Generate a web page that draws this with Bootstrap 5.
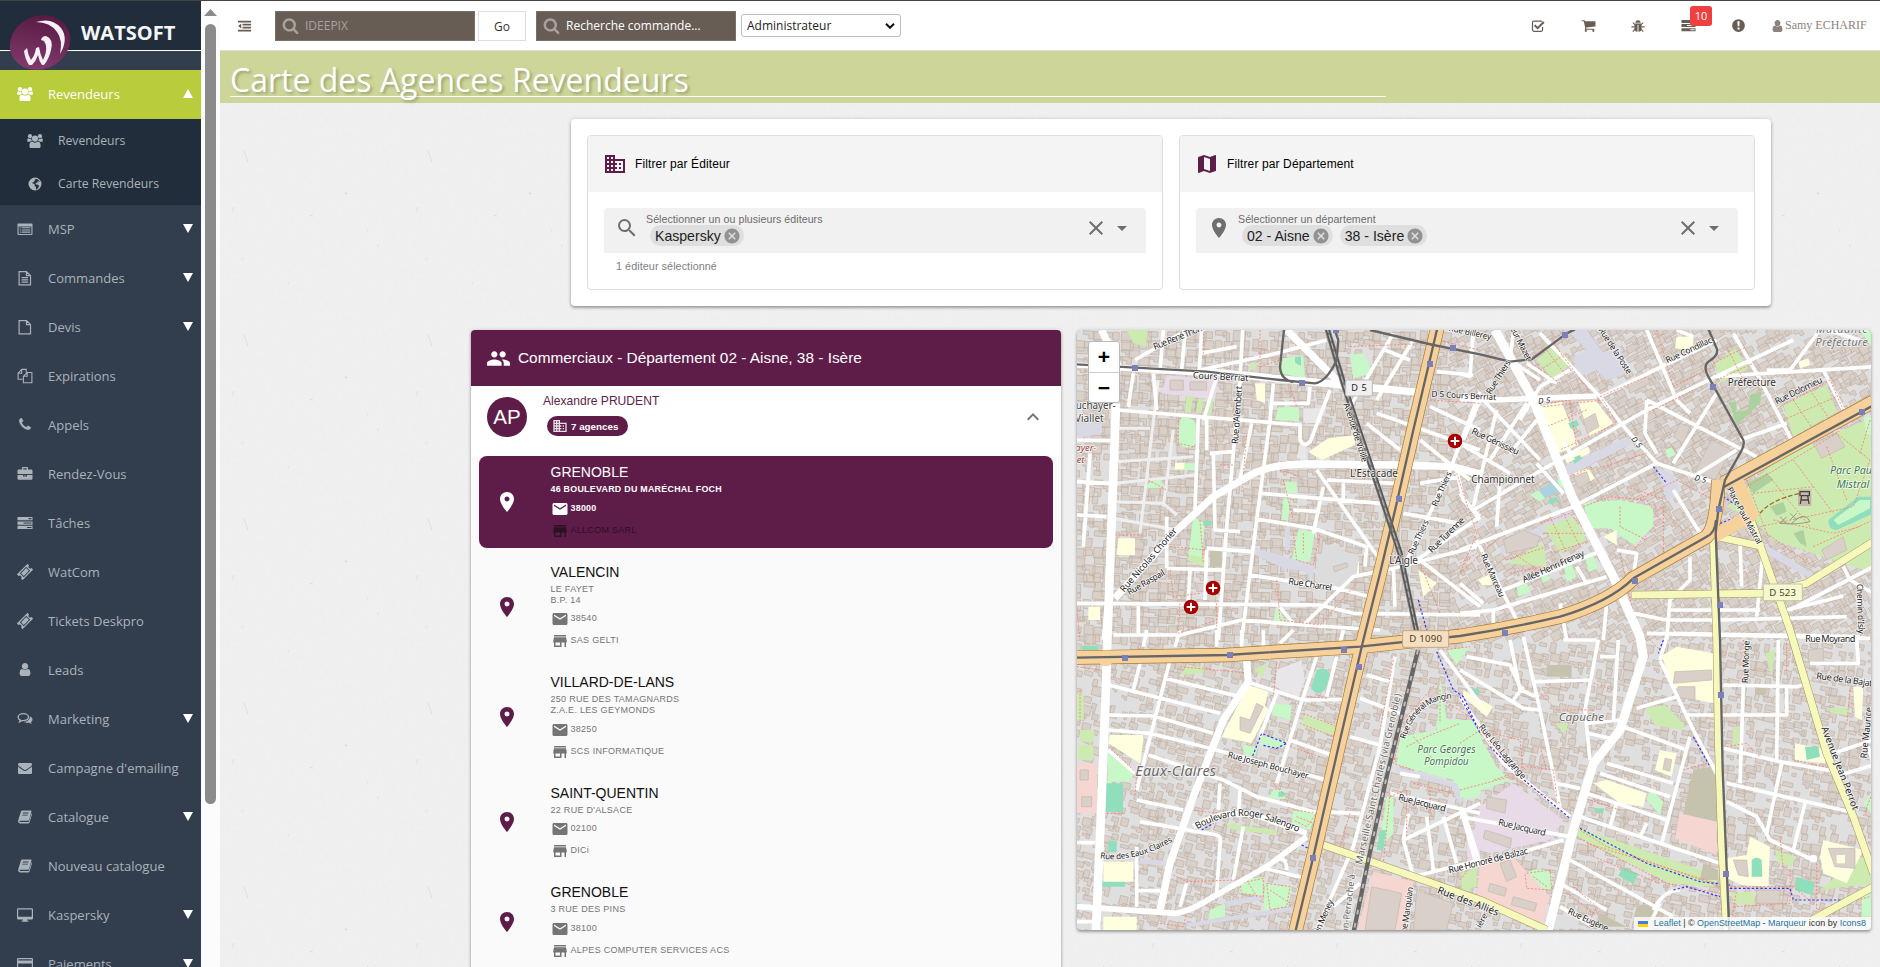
<!DOCTYPE html>
<html lang="fr">
<head>
<meta charset="utf-8">
<title>Carte des Agences Revendeurs</title>
<link href="https://cdn.jsdelivr.net/npm/bootstrap@5.3.0/dist/css/bootstrap.min.css" rel="stylesheet">
<style>
:root{--plum:#5e1d49}
html,body{height:967px;overflow:hidden}
body{font-family:"Liberation Sans",Arial,sans-serif;border-top:1px solid #444;background:#f0f0f0;color:#000;line-height:normal}
svg{display:block;flex:none}
.ic{fill:currentColor}
.shell{height:966px}
/* sidebar */
.side{width:201px;background:#323e4e;font:13px "Open Sans",sans-serif;color:#aab2ba;flex:none}
.side-head{height:50px;border-bottom:1px solid #fff;background:#212d3b;padding:8px 0 0 81px;margin-bottom:19px;position:relative}
.side-head b{font-size:20px;color:#f4f6f7;line-height:48px;display:block;height:40px}
.logo{position:absolute;left:9px;top:13px}
.nav-i{height:49px;padding:0 8px 2px 17px}
.nav-i .t{margin-left:15px}
.nav-i.on{background:#b9cc3b;color:#fff}
.sub{background:#212d3b}
.sub .nav-i{height:43px;padding:0 8px 0 27px;font-size:12.2px}
.tri{fill:#fff;margin-left:auto;margin-bottom:1px}
.sbar{width:19px;background:#fcfcfc;flex:none;padding:8px 4px 0 3px}
.sbar i{display:block;width:11px;height:780px;border-radius:6px;background:#8b8b8b;margin:8px 0 0 1px}
/* top bar */
.main{min-width:0;background-color:#f0f0f0}
.top{height:50px;background:#fff;border-bottom:1px solid #dcdcdc;color:#685d55;font:12px "Open Sans",sans-serif;padding-left:17px}
.top .dd{margin-right:23px}
.sbox{width:200px;height:30px;background:#685d55;border:1px solid #7a6f67;outline:1px solid #685d55;outline-offset:-2px;color:#a9a29c;padding-left:6px;gap:6px}
.go{width:48px;height:30px;border:1px solid #ddd;color:#333;margin:1px 10px 0 3px}
.sel{width:160px;height:23px;border:1px solid #bdbdbd;border-radius:3px;color:#222;margin:0 0 0 5px;padding:0 5px}
.t-ic{width:50px}
.cnt{position:absolute;left:27px;top:-12px;width:22px;height:20px;border-radius:3px;background:#ef4040;color:#fff;font-size:11px;text-align:center;line-height:19px}
.who{font:12px "Liberation Serif",serif;color:#8b827b;gap:2px;width:117px;padding-left:9px;white-space:nowrap}
.band{height:52px;background:#cdd698;padding:0 10px}
.band h1{font:32px/46px "Open Sans",sans-serif;height:46px;width:1156px;color:#fff;border-bottom:1px solid #fff;margin:0;padding-top:6px;text-shadow:2px 2px 3px rgba(0,0,0,.25);white-space:nowrap}
.paper{background:#f0f0f0 url("data:image/svg+xml,%3Csvg xmlns='http://www.w3.org/2000/svg' width='184' height='184'%3E%3Cfilter id='n'%3E%3CfeTurbulence baseFrequency='.55' numOctaves='3' stitchTiles='stitch'/%3E%3CfeColorMatrix values='0 0 0 0 .4 0 0 0 0 .4 0 0 0 0 .4 .12 0 0 0 -.035'/%3E%3C/filter%3E%3Crect width='184' height='184' filter='url(%23n)'/%3E%3Cpath d='M12 26l2-4M125 8h2v1h-2M22 74h1v1M147 45h1v1M68 98h1M106 119h1M24 150l4 11M158 60v2M90 30l3 1' stroke='%23ccc' stroke-width='.5' fill='none'/%3E%3C/svg%3E")}
/* filters */
.mcard{border-radius:4px;box-shadow:0 2px 3px rgba(0,0,0,.3),0 0 4px rgba(0,0,0,.14)}
.filters{width:1200px;height:187px;margin:16px 0 0 351px;background:#fff;padding:16px}
.fbox{width:576px;height:155px;border:1px solid #dedede;border-radius:4px;overflow:hidden}
.fhead{height:56px;background:#f4f4f4;font-size:12px;letter-spacing:.12px;padding-left:15px;gap:8px}
.field{height:45px;margin:16px 16px 0;background:#f1f1f1;border-radius:4px 4px 0 0;color:#6e6e6e;padding:0 12px 0 11px}
.fcol{padding:5px 0 0 7px}
.lab{font-size:10.6px;line-height:12px;color:#6b6b6b;letter-spacing:.06px}
.dd-a{margin-left:2px}
.chip-m{height:21px;border-radius:11px;background:#dfdfdf;color:#222;font-size:14.1px;padding:1px 2px 0 5px;margin-left:4px;margin-right:3px;gap:1px}
.chip-m svg{fill:#929292;margin-bottom:1px}
.hint{font-size:10.8px;letter-spacing:.06px;color:#808080;margin:7px 0 0 28px}
/* reps */
.cols{gap:16px;margin:24px 0 0 251px}
.reps{width:590px;height:660px;background:#fafafa;overflow:hidden}
.rhead{height:56px;background:var(--plum);color:#fff;font-size:15.4px;padding-left:15px;gap:7px}
.rep{height:70px;background:#fff;padding:0 16px}
.ava{width:40px;height:40px;border-radius:50%;background:var(--plum);color:#fff;font-size:20.5px;margin-top:11px}
.nm{color:var(--plum);font-size:12.1px;line-height:14px;margin-top:8px}
.bdg{width:81px;height:20px;border-radius:10px;background:var(--plum);color:#fff;font-weight:bold;font-size:9.8px;margin:8px 0 0 4px;padding-left:5px;gap:3px}
.chev{margin:19px 0 0 auto}
.ag{margin:0 8px 7.5px;border-radius:8px;padding:8px 0 7px 15.5px;font-size:9px;letter-spacing:.28px;color:#757575}
.ag .pin{color:var(--plum);width:24px;margin:0 32px 2px 0}
.ag h2{font-size:14px;line-height:16px;letter-spacing:0;margin:0 0 4px;color:#111;font-weight:400}
.ag .ad{line-height:11px;margin-bottom:2px}
.ag .ln{height:22px;gap:1px;padding-bottom:1px}
.ag .ln svg{margin:2px 0 0 -1px}
.ag.on{background:var(--plum);color:#fff}
.ag.on .pin,.ag.on h2{color:#fff}
.ag.on .ad,.ag.on .ml{font-weight:bold;letter-spacing:.26px;font-size:8.9px}
.ag.on .st{color:#2c1024}
/* map */
.map{width:794px;height:600px;overflow:hidden;position:relative;background:#e0dfdf}
.zoomc{position:absolute;left:11px;top:11px;width:32px;border:1px solid #bbb;border-radius:3px;background:#fff;font:bold 21px/29px "Liberation Sans",sans-serif;text-align:center}
.zoomc div{height:30px}
.zoomc div+div{border-top:1px solid #ccc}
.attr{position:absolute;right:0;bottom:0;height:13px;background:rgba(255,255,255,.8);font-size:8.95px;line-height:13px;color:#333;padding:0 5px 0 4px;gap:2px;white-space:pre}
.attr u{color:#1d76a5;text-decoration:none}
.map text{font-family:"Noto Sans",sans-serif;font-size:27.5px;fill:#222;stroke:#fff;stroke-width:5px;stroke-opacity:.75;paint-order:stroke;stroke-linejoin:round}
.map path{stroke-linejoin:round}
.w{stroke:#fff;fill:none}.or{stroke:#f7d19c;fill:none}.ye{stroke:#f6f9bb;fill:none}.tr{stroke:#666;stroke-width:7;fill:none}
.g1{fill:#c8f7c8}.g2{fill:#cdebb0}.g3{fill:#add19e}.y1{fill:#ffffe0}.pk{fill:#f6d6d1}.pu{fill:#e8dae7}.tq{fill:#8fdfbc}.gr{fill:#c5c3ad}.pd{fill:#d9d9e6}.bl{fill:#d9d0c9;stroke:#c4b6ab;stroke-width:2}
.rd{stroke:#fa8072;stroke-width:2.6;stroke-dasharray:6 5;fill:none}.bd{stroke:#33f;stroke-width:3.5;stroke-dasharray:7 6;fill:none}
</style>
</head>
<body>
<svg width="0" height="0" class="position-absolute"><defs>
<symbol id="search" viewBox="0 0 1792 1792"><path d="M1216 832q0-185-131.500-316.500t-316.500-131.500-316.500 131.500-131.500 316.500 131.500 316.500 316.500 131.500 316.500-131.500 131.500-316.500zm512 832q0 52-38 90t-90 38q-54 0-90-38l-343-342q-179 124-399 124-143 0-273.500-55.500t-225-150-150-225-55.500-273.500 55.500-273.500 150-225 225-150 273.500-55.500 273.500 55.500 225 150 150 225 55.500 273.500q0 220-124 399l343 343q37 37 37 90z"/></symbol>
<symbol id="envelope" viewBox="0 0 1792 1792"><path d="M1792 710v794q0 66-47 113t-113 47h-1472q-66 0-113-47t-47-113v-794q44 49 101 87 362 246 497 345 57 42 92.500 65.500t94.500 48 110 24.500h2q51 0 110-24.500t94.500-48 92.500-65.500q170-123 498-345 57-39 100-87zm0-294q0 79-49 151t-122 123q-376 261-468 325-10 7-42.500 31t-54 38.500-52 32.500-57.500 27-50 9h-2q-23 0-50-9t-57.500-27-52-32.500-54-38.500-42.500-31q-91-64-262-182.500t-205-142.500q-62-42-117-115.500t-55-136.500q0-78 41.500-130t118.500-52h1472q65 0 112.500 47t47.500 113z"/></symbol>
<symbol id="user" viewBox="0 0 1792 1792"><path d="M1536 1399q0 109-62.500 187t-150.500 78h-854q-88 0-150.500-78t-62.500-187q0-85 8.500-160.500t31.500-152 58.500-131 94-89 134.500-34.500q131 128 313 128t313-128q76 0 134.500 34.500t94 89 58.500 131 31.500 152 8.500 160.500zm-256-887q0 159-112.500 271.500t-271.500 112.500-271.500-112.500-112.500-271.500 112.500-271.500 271.500-112.500 271.500 112.500 112.500 271.500z"/></symbol>
<symbol id="phone" viewBox="0 0 1792 1792"><path d="M1600 1240q0 27-10 70.500t-21 68.500q-21 50-122 106-94 51-186 51-27 0-53-3.500t-57.500-12.500-47-14.500-55.500-20.500-49-18q-98-35-175-83-127-79-264-216t-216-264q-48-77-83-175-3-9-18-49t-20.500-55.500-14.500-47-12.500-57.500-3.500-53q0-92 51-186 56-101 106-122 25-11 68.500-21t70.500-10q14 0 21 3 18 6 53 76 11 19 30 54t35 63.500 31 53.500q3 4 17.500 25t21.500 35.500 7 28.500q0 20-28.500 50t-62 55-62 53-28.500 46q0 9 5 22.500t8.500 20.500 14 24 11.500 19q76 137 174 235t235 174q2 1 19 11.500t24 14 20.500 8.500 22.500 5q18 0 46-28.500t53-62 55-62 50-28.500q14 0 28.500 7t35.500 21.500 25 17.500q25 15 53.500 31t63.500 35 54 30q70 35 76 53 3 7 3 21z"/></symbol>
<symbol id="cart" viewBox="0 0 1792 1792"><path d="M704 1536q0 52-38 90t-90 38-90-38-38-90 38-90 90-38 90 38 38 90zm896 0q0 52-38 90t-90 38-90-38-38-90 38-90 90-38 90 38 38 90zm128-1088v512q0 24-16.500 42.500t-40.500 21.500l-1044 122q13 60 13 70 0 16-24 64h920q26 0 45 19t19 45-19 45-45 19h-1024q-26 0-45-19t-19-45q0-11 8-31.500t16-36 21.500-40 15.500-29.500l-177-823h-204q-26 0-45-19t-19-45 19-45 45-19h256q16 0 28.500 6.500t19.500 15.500 13 24.500 8 26 5.500 29.500 4.500 26h1201q26 0 45 19t19 45z"/></symbol>
<symbol id="users" viewBox="0 0 16 16"><circle cx="8" cy="5.6" r="3.1"/><path d="M3.200 15q-.8-.4-.8-2 0-4.200 2.700-4.400Q6.200 9.700 8 9.700t2.900-1.100q2.700.2 2.700 4.400 0 1.600-.8 2z"/><circle cx="3" cy="3.200" r="2.100"/><circle cx="13" cy="3.200" r="2.100"/><path d="M.3 8.500Q0 5.400 1.200 5.300q1.800 1 3 .3.1 1.300.8 2.200Q3.700 8 3.100 8.800H.3zM15.700 8.500q.3-3.100-.9-3.200-1.800 1-3 .3-.1 1.300-.8 2.200 1.300.2 1.900 1h2.800z"/></symbol>
<symbol id="globe" viewBox="0 0 16 16"><path fill-rule="evenodd" d="M8 1.500a6.500 6.500 0 1 0 0 13 6.500 6.500 0 0 0 0-13zM9 3l2 .4 1.800 2-1 .3-.8-.8-.9 1.100.6.8-1.400-.1-1 1 .8.9 1.700.2 1.200.7-.4 1.800-1.800 2.200-.8-.3.100-2-1.400-1.500.1-1.200L6.300 7.400 4.800 7l.7-.6.9.2.9-1.300 1-.5L7.200 4z"/></symbol>
<symbol id="list" viewBox="0 0 16 16"><path fill-rule="evenodd" d="M1.200 2.500h13.600q.7 0 .7.700v10q0 .8-.7.800H1.200q-.7 0-.7-.8v-10q0-.7.700-.7zm.4 2.900v7.500h12.800V5.400zM2.700 6.200h1.100v1.100H2.700zm2 0h8.700v1.100H4.700zm-2 2.200h1.100v1.100H2.700zm2 0h8.700v1.100H4.700zm-2 2.200h1.100v1.100H2.700zm2 0h8.700v1.100H4.700z"/></symbol>
<symbol id="filet" viewBox="0 0 16 16"><path fill="none" stroke="currentColor" stroke-width="1.200" d="M2.100 1.600h7.400l4 4v9.300H2.100zM9.500 1.600v4h4M4.600 7.700h6.400M4.600 9.900h6.400M4.600 12.100h6.400"/></symbol>
<symbol id="file" viewBox="0 0 16 16"><path fill="none" stroke="currentColor" stroke-width="1.200" d="M2.100 1.600h7.400l4 4v9.300H2.100zM9.500 1.600v4h4"/></symbol>
<symbol id="files" viewBox="0 0 16 16"><path fill="none" stroke="currentColor" stroke-width="1.100" d="M5.600 11.300H1.100V5.200l3.600-3.800h4.500v3M4.700 1.400v3.800H1.100M6.400 8.300l3.800-3.800h4.700v10.200H6.400zM10.200 4.500v3.800H6.400"/></symbol>
<symbol id="brief" viewBox="0 0 16 16"><path fill-rule="evenodd" d="M5 3.400V1.700q0-.7.700-.7h4.600q.7 0 .7.700v1.700h3.300q1.200 0 1.200 1.200v3.300H.5V4.600q0-1.200 1.200-1.200zm1.200-1.200v1.200h3.600V2.200zM.5 8.900h5.600v1.500h3.800V8.900h5.600v3.600q0 1.200-1.200 1.200H1.700q-1.200 0-1.200-1.200zm6.600 0h1.800v.7H7.100z"/></symbol>
<symbol id="tasks" viewBox="0 0 16 16"><path fill-rule="evenodd" d="M.5 2h15v3.300H.5zm11 1.100v1.100h3V3.100zM.5 6.400h15v3.300H.5zm6 1.100v1.100h8V7.500zM.5 10.800h15v3.300H.5zm9.500 1.100V13h4.500v-1.100z"/></symbol>
<symbol id="ticket" viewBox="0 0 16 16"><g transform="rotate(-45 8 8)"><path fill-rule="evenodd" d="M.5 4h15v2.200a1.800 1.800 0 0 0 0 3.600V12H.5V9.800a1.800 1.800 0 0 0 0-3.600zm3 1.200v5.600h9V5.200zM4.400 6.100h7.200v3.800H4.400z"/></g></symbol>
<symbol id="comments" viewBox="0 0 16 16"><path fill="none" stroke="currentColor" stroke-width="1.300" d="M6.300 2.700c-3 0-5.200 1.600-5.200 3.500 0 1.200.8 2.200 2.200 2.900l-.7 1.700 2.300-1.200c3.500.5 6.600-1.100 6.600-3.400 0-1.900-2.200-3.500-5.200-3.500z"/><path d="M12.800 5.200c1.700.7 2.900 2 2.700 3.500-.1 1-.7 1.800-1.700 2.400l1 2-2.900-1.300c-2 .3-4-.1-5.200-1.100 3.400.2 6.400-1.700 6.100-5.500z"/></symbol>
<symbol id="book" viewBox="0 0 16 16"><path fill-rule="evenodd" d="M5.200 1.500h9q1 .1.700 1.200l-2.500 8.800q-.3 1-1.500 1H3q-.9 0-.9.800.1.500.9.500h8.400q.6 0 .9-.7l2.700-8.500q.6.500.4 1.300l-2.600 8.400q-.3 1.200-1.600 1.200H2.700Q.600 15.200.6 13q0-.8.500-2L3.600 2.900q.4-1.400 1.600-1.400zm.7 2.300l-.3 1h5.900l.3-1zM5.200 6l-.3 1h5.900l.3-1z"/></symbol>
<symbol id="desktop" viewBox="0 0 16 16"><path fill-rule="evenodd" d="M1.200 1.300h13.600q1.200 0 1.200 1.100v9q0 1.100-1.200 1.100H10l.4 1.300h1v1H4.600v-1h1l.4-1.300H1.200Q0 12.500 0 11.400v-9q0-1.100 1.200-1.100zm0 1.200v7.200h13.600V2.500z"/></symbol>
<symbol id="card" viewBox="0 0 16 16"><path fill-rule="evenodd" d="M1.200 2h13.600q1.200 0 1.200 1.200v9.600q0 1.200-1.200 1.200H1.200Q0 14 0 12.800V3.200Q0 2 1.200 2zm0 1.200v1.300h13.600V3.200zm0 4.300v5.300h13.600V7.500z"/></symbol>
<symbol id="dedent" viewBox="0 0 16 16"><path d="M.5 2h15v2H.5zm5.300 3.400h9.700v2H5.800zm0 3.400h9.700v2H5.800zM.5 12.200h15v2H.5zM4.300 5.200v5.600L.7 8z"/></symbol>
<symbol id="check" viewBox="0 0 16 16"><path fill="none" stroke="currentColor" stroke-width="1.400" d="M13.200 9v3.400q0 1.700-1.700 1.700H3.400q-1.700 0-1.700-1.700V4.200q0-1.700 1.700-1.700h8.100q.9 0 1.300.4"/><path fill="none" stroke="currentColor" stroke-width="2.300" d="M4.200 7.200l3.300 3.200 7.200-7"/></symbol>
<symbol id="bug" viewBox="0 0 16 16"><path d="M5 4.300a3 3 0 0 1 6 0zM3.900 5.200h8.200v6q0 3.200-3.600 3.500V6.500h-1v8.200q-3.600-.3-3.600-3.500z"/><path fill="none" stroke="currentColor" stroke-width="1.200" d="M4.500 6.500L2 4M11.500 6.500L14 4M4 9H.5M12 9h3.500M4.500 11.500L2 14.500M11.500 11.500L14 14.500"/></symbol>
<symbol id="excl" viewBox="0 0 16 16"><path fill-rule="evenodd" d="M8 1.200a6.800 6.800 0 1 0 0 13.600A6.800 6.800 0 0 0 8 1.200zM6.800 3.400h2.400l-.3 5.400H7.100zM6.900 10h2.200v2.200H6.900z"/></symbol>
<symbol id="place" viewBox="0 0 24 24"><path d="M12 2C8.130 2 5 5.130 5 9c0 5.250 7 13 7 13s7-7.750 7-13c0-3.870-3.130-7-7-7zm0 9.500a2.500 2.500 0 0 1 0-5 2.500 2.500 0 0 1 0 5z"/></symbol>
<symbol id="mail" viewBox="0 0 24 24"><path d="M20 4H4c-1.100 0-1.990.9-1.990 2L2 18c0 1.100.9 2 2 2h16c1.100 0 2-.9 2-2V6c0-1.100-.9-2-2-2zm0 4l-8 5-8-5V6l8 5 8-5v2z"/></symbol>
<symbol id="store" viewBox="0 0 24 24"><path d="M20 4H4v2h16V4zm1 10v-2l-1-5H4l-1 5v2h1v6h10v-6h4v6h2v-6h1zm-9 4H6v-4h6v4z"/></symbol>
<symbol id="people" viewBox="0 0 24 24"><path d="M16 11c1.660 0 2.990-1.340 2.990-3S17.660 5 16 5c-1.660 0-3 1.340-3 3s1.340 3 3 3zm-8 0c1.660 0 2.990-1.340 2.990-3S9.660 5 8 5C6.340 5 5 6.340 5 8s1.340 3 3 3zm0 2c-2.330 0-7 1.170-7 3.500V19h14v-2.500c0-2.330-4.670-3.500-7-3.500zm8 0c-.29 0-.62.02-.97.05 1.160.84 1.970 1.970 1.970 3.450V19h6v-2.500c0-2.330-4.670-3.500-7-3.500z"/></symbol>
<symbol id="msearch" viewBox="0 0 24 24"><path d="M15.500 14h-.79l-.28-.27A6.471 6.471 0 0 0 16 9.500 6.500 6.500 0 1 0 9.500 16c1.610 0 3.090-.59 4.230-1.570l.27.28v.79l5 4.990L20.490 19l-4.990-5zm-6 0C7.010 14 5 11.990 5 9.500S7.010 5 9.500 5 14 7.010 14 9.500 11.990 14 9.500 14z"/></symbol>
<symbol id="close" viewBox="0 0 24 24"><path d="M19 6.410L17.590 5 12 10.590 6.410 5 5 6.410 10.590 12 5 17.590 6.410 19 12 13.410 17.590 19 19 17.590 13.410 12z"/></symbol>
<symbol id="arrow" viewBox="0 0 24 24"><path d="M7 10l5 5 5-5z"/></symbol>
<symbol id="cancel" viewBox="0 0 24 24"><path d="M12 2C6.470 2 2 6.470 2 12s4.470 10 10 10 10-4.470 10-10S17.530 2 12 2zm5 13.590L15.590 17 12 13.410 8.410 17 7 15.590 10.590 12 7 8.410 8.410 7 12 10.590 15.590 7 17 8.410 13.410 12 17 15.590z"/></symbol>
<symbol id="mapi" viewBox="0 0 24 24"><path d="M20.500 3l-.16.03L15 5.100 9 3 3.360 4.900c-.21.07-.36.25-.36.48V20.500c0 .28.22.5.5.5l.16-.03L9 18.900l6 2.100 5.640-1.900c.21-.07.36-.25.36-.48V3.500c0-.28-.22-.5-.5-.5zM15 19l-6-2.110V5l6 2.110V19z"/></symbol>
<symbol id="biz" viewBox="0 0 24 24"><path d="M12 7V3H2v18h20V7H12zM6 19H4v-2h2v2zm0-4H4v-2h2v2zm0-4H4V9h2v2zm0-4H4V5h2v2zm4 12H8v-2h2v2zm0-4H8v-2h2v2zm0-4H8V9h2v2zm0-4H8V5h2v2zm10 12h-8v-2h2v-2h-2v-2h2v-2h-2V9h8v10zm-2-8h-2v2h2v-2zm0 4h-2v2h2v-2z"/></symbol>
<symbol id="down" viewBox="0 0 10 9"><path d="M0 0h10L5 9z"/></symbol>
</defs></svg>

<div class="shell d-flex">
<aside class="side">
  <div class="side-head"><svg class="logo" width="62" height="57" viewBox="0 0 62 57"><defs><linearGradient id="lg" x1="0" y1="1" x2=".8" y2="0"><stop offset="0" stop-color="#8a4076"/><stop offset="1" stop-color="#54183f"/></linearGradient></defs><ellipse cx="31" cy="28.500" rx="31" ry="26.500" transform="rotate(-25 31 28.500)" fill="url(#lg)"/><path d="M27 8Q43 3 52 14q8 11-1 26 3-14-3-22Q41 8 27 8z" fill="#f4f0f4"/><path d="M32 26q1-4 5-4 8 3 5 14-2 9-7 15h-2q-3-4-4-10-2 6-6 10h-3q-4-6-5-14l3-3q1 7 4 12 4-5 5-12l3-1q1 7 4 13 4-8 3-14-1-6-5-6z" fill="#f4f0f4"/></svg><b>WATSOFT</b></div>
  <div class="nav-i on d-flex align-items-center"><svg class="ic" width="16" height="16"><use href="#users"/></svg><span class="t">Revendeurs</span><svg class="tri" width="10" height="9"><path d="M0 9h10L5 0z"/></svg></div>
  <div class="sub">
    <div class="nav-i d-flex align-items-center"><svg class="ic" width="16" height="16"><use href="#users"/></svg><span class="t">Revendeurs</span></div>
    <div class="nav-i d-flex align-items-center"><svg class="ic" width="16" height="16"><use href="#globe"/></svg><span class="t">Carte Revendeurs</span></div>
  </div>
  <div class="nav-i d-flex align-items-center"><svg class="ic" width="16" height="16"><use href="#list"/></svg><span class="t">MSP</span><svg class="tri" width="10" height="9"><use href="#down"/></svg></div>
  <div class="nav-i d-flex align-items-center"><svg class="ic" width="16" height="16"><use href="#filet"/></svg><span class="t">Commandes</span><svg class="tri" width="10" height="9"><use href="#down"/></svg></div>
  <div class="nav-i d-flex align-items-center"><svg class="ic" width="16" height="16"><use href="#file"/></svg><span class="t">Devis</span><svg class="tri" width="10" height="9"><use href="#down"/></svg></div>
  <div class="nav-i d-flex align-items-center"><svg class="ic" width="16" height="16"><use href="#files"/></svg><span class="t">Expirations</span></div>
  <div class="nav-i d-flex align-items-center"><svg class="ic" width="16" height="15"><use href="#phone"/></svg><span class="t">Appels</span></div>
  <div class="nav-i d-flex align-items-center"><svg class="ic" width="16" height="16"><use href="#brief"/></svg><span class="t">Rendez-Vous</span></div>
  <div class="nav-i d-flex align-items-center"><svg class="ic" width="16" height="16"><use href="#tasks"/></svg><span class="t">Tâches</span></div>
  <div class="nav-i d-flex align-items-center"><svg class="ic" width="16" height="16"><use href="#ticket"/></svg><span class="t">WatCom</span></div>
  <div class="nav-i d-flex align-items-center"><svg class="ic" width="16" height="16"><use href="#ticket"/></svg><span class="t">Tickets Deskpro</span></div>
  <div class="nav-i d-flex align-items-center"><svg class="ic" width="16" height="15"><use href="#user"/></svg><span class="t">Leads</span></div>
  <div class="nav-i d-flex align-items-center"><svg class="ic" width="16" height="16"><use href="#comments"/></svg><span class="t">Marketing</span><svg class="tri" width="10" height="9"><use href="#down"/></svg></div>
  <div class="nav-i d-flex align-items-center"><svg class="ic" width="16" height="14"><use href="#envelope"/></svg><span class="t">Campagne d'emailing</span></div>
  <div class="nav-i d-flex align-items-center"><svg class="ic" width="16" height="15"><use href="#book"/></svg><span class="t">Catalogue</span><svg class="tri" width="10" height="9"><use href="#down"/></svg></div>
  <div class="nav-i d-flex align-items-center"><svg class="ic" width="16" height="15"><use href="#book"/></svg><span class="t">Nouveau catalogue</span></div>
  <div class="nav-i d-flex align-items-center"><svg class="ic" width="16" height="16"><use href="#desktop"/></svg><span class="t">Kaspersky</span><svg class="tri" width="10" height="9"><use href="#down"/></svg></div>
  <div class="nav-i d-flex align-items-center"><svg class="ic" width="16" height="16"><use href="#card"/></svg><span class="t">Paiements</span><svg class="tri" width="10" height="9"><use href="#down"/></svg></div>
</aside>
<div class="sbar"><svg width="13" height="7"><path d="M0 7L6.500 0 13 7z" fill="#8b8b8b"/></svg><i></i></div>

<div class="main flex-grow-1 paper">
  <header class="top d-flex align-items-center">
    <svg class="ic dd" width="15" height="14"><use href="#dedent"/></svg>
    <div class="sbox d-flex align-items-center"><svg class="ic" width="17" height="17"><use href="#search"/></svg><span>IDEEPIX</span></div>
    <div class="go d-flex align-items-center justify-content-center">Go</div>
    <div class="sbox d-flex align-items-center"><svg class="ic" width="17" height="17"><use href="#search"/></svg><span class="text-white">Recherche commande...</span></div>
    <div class="sel d-flex align-items-center justify-content-between"><span>Administrateur</span><svg width="10" height="6"><path d="M1 .8l4 4 4-4" fill="none" stroke="#111" stroke-width="2"/></svg></div>
    <div class="ms-auto d-flex align-items-center">
      <div class="t-ic d-flex justify-content-center"><svg class="ic" width="14" height="14"><use href="#check"/></svg></div>
      <div class="t-ic d-flex justify-content-center"><svg class="ic" width="15" height="15"><use href="#cart"/></svg></div>
      <div class="t-ic d-flex justify-content-center"><svg class="ic" width="14" height="14"><use href="#bug"/></svg></div>
      <div class="t-ic d-flex justify-content-center position-relative"><svg class="ic" width="15" height="15"><use href="#tasks"/></svg><span class="cnt">10</span></div>
      <div class="t-ic d-flex justify-content-center"><svg class="ic" width="15" height="15"><use href="#excl"/></svg></div>
      <div class="who d-flex align-items-center"><svg class="ic" width="11" height="12" viewBox="2 1 12 14"><use href="#user" width="16" height="16"/></svg>Samy ECHARIF</div>
    </div>
  </header>
  <div class="band"><h1>Carte des Agences Revendeurs</h1></div>

  <div class="filters mcard d-flex gap-3">
    <div class="fbox">
      <div class="fhead d-flex align-items-center"><svg width="24" height="24" fill="#5e1d49"><use href="#biz"/></svg>Filtrer par Éditeur</div>
      <div class="field d-flex"><svg class="ic mt-2" width="24" height="24"><use href="#msearch"/></svg>
        <div class="fcol"><div class="lab">Sélectionner un ou plusieurs éditeurs</div><div class="d-flex"><span class="chip-m d-flex align-items-center">Kaspersky<svg width="20" height="18"><use href="#cancel"/></svg></span></div></div>
        <svg class="ic ms-auto mt-2" width="24" height="24"><use href="#close"/></svg><svg class="ic mt-2 dd-a" width="24" height="24"><use href="#arrow"/></svg></div>
      <div class="hint">1 éditeur sélectionné</div>
    </div>
    <div class="fbox">
      <div class="fhead d-flex align-items-center"><svg width="24" height="24" fill="#5e1d49"><use href="#mapi"/></svg>Filtrer par Département</div>
      <div class="field d-flex"><svg class="ic mt-2" width="24" height="24"><use href="#place"/></svg>
        <div class="fcol"><div class="lab">Sélectionner un département</div><div class="d-flex"><span class="chip-m d-flex align-items-center">02 - Aisne<svg width="20" height="18"><use href="#cancel"/></svg></span><span class="chip-m d-flex align-items-center">38 - Isère<svg width="20" height="18"><use href="#cancel"/></svg></span></div></div>
        <svg class="ic ms-auto mt-2" width="24" height="24"><use href="#close"/></svg><svg class="ic mt-2 dd-a" width="24" height="24"><use href="#arrow"/></svg></div>
    </div>
  </div>

  <div class="cols d-flex">
    <section class="reps mcard">
      <div class="rhead d-flex align-items-center"><svg class="ic" width="25" height="25"><use href="#people"/></svg>Commerciaux - Département 02 - Aisne, 38 - Isère</div>
      <div class="rep d-flex"><div class="ava d-flex align-items-center justify-content-center">AP</div>
        <div class="ms-3"><div class="nm">Alexandre PRUDENT</div><div class="bdg d-flex align-items-center"><svg class="ic" width="16" height="16" opacity=".85"><use href="#biz"/></svg>7 agences</div></div>
        <svg class="chev" width="24" height="24" fill="#757575"><path d="M7.410 15.410L12 10.830l4.590 4.580L18 14l-6-6-6 6z"/></svg></div>
      <div class="ag on d-flex align-items-center"><svg class="ic pin" width="24" height="24"><use href="#place"/></svg><div><h2>GRENOBLE</h2><div class="ad">46 BOULEVARD DU MARÉCHAL FOCH</div><div class="ln ml d-flex align-items-center"><svg class="ic" width="20" height="18"><use href="#mail"/></svg>38000</div><div class="ln st d-flex align-items-center"><svg class="ic" width="20" height="18"><use href="#store"/></svg>ALLCOM SARL</div></div></div>
      <div class="ag d-flex align-items-center"><svg class="ic pin" width="24" height="24"><use href="#place"/></svg><div><h2>VALENCIN</h2><div class="ad">LE FAYET<br>B.P. 14</div><div class="ln d-flex align-items-center"><svg class="ic" width="20" height="18"><use href="#mail"/></svg>38540</div><div class="ln d-flex align-items-center"><svg class="ic" width="20" height="18"><use href="#store"/></svg>SAS GELTI</div></div></div>
      <div class="ag d-flex align-items-center"><svg class="ic pin" width="24" height="24"><use href="#place"/></svg><div><h2>VILLARD-DE-LANS</h2><div class="ad">250 RUE DES TAMAGNARDS<br>Z.A.E. LES GEYMONDS</div><div class="ln d-flex align-items-center"><svg class="ic" width="20" height="18"><use href="#mail"/></svg>38250</div><div class="ln d-flex align-items-center"><svg class="ic" width="20" height="18"><use href="#store"/></svg>SCS INFORMATIQUE</div></div></div>
      <div class="ag d-flex align-items-center"><svg class="ic pin" width="24" height="24"><use href="#place"/></svg><div><h2>SAINT-QUENTIN</h2><div class="ad">22 RUE D'ALSACE</div><div class="ln d-flex align-items-center"><svg class="ic" width="20" height="18"><use href="#mail"/></svg>02100</div><div class="ln d-flex align-items-center"><svg class="ic" width="20" height="18"><use href="#store"/></svg>DICi</div></div></div>
      <div class="ag d-flex align-items-center"><svg class="ic pin" width="24" height="24"><use href="#place"/></svg><div><h2>GRENOBLE</h2><div class="ad">3 RUE DES PINS</div><div class="ln d-flex align-items-center"><svg class="ic" width="20" height="18"><use href="#mail"/></svg>38100</div><div class="ln d-flex align-items-center"><svg class="ic" width="20" height="18"><use href="#store"/></svg>ALPES COMPUTER SERVICES ACS</div></div></div>
    </section>

    <section class="map mcard">
    <svg width="794" height="600" viewBox="51 30 2382 1800">
      <g id="blds"></g>
      <!-- land use -->
      <g>
        <path class="pu" d="M320 165l155 15-10 60-160-20z"/><path class="g2" d="M380 225l20 3-8 50-18-2zM415 235l15 2-6 42-16-2zM440 235l20 2-6 48-14-2zM200 30h60v50l-40-10zM570 130h20v20h-20zM390 700l50 10-10 30-50-20z"/>
        <path class="g1" d="M365 292q40-5 45 30l-4 50q-20 20-45 5-15-40 4-85zM655 262h62v42l-72-4zM870 105l40-5 30 60-60 15zM675 485h35v35h-35zM670 535h20l-5 65h-20zM715 630l50 5-15 90-55-5zM400 590l35 20-10 100-40-5zM345 430h60v20h-60zM265 490l40-15v30h-45zM670 115l60-10 5 70-75-15zM650 850l20 45 30 10h-60z"/>
        <path class="tq" d="M705 110h18v28l-18-10zM430 603h22v14h-22z"/><path d="M730 265h55v45l-55-2zM720 370h20v50l-30-5z" fill="#e8e8e8"/>
        <path class="y1" d="M345 428h28v20h-28zM175 655h50v50h-55zM745 395l60-40 80-10v30l-100 45zM1075 750l55 40-40 40zM85 860h35v40h-35zM585 190h30v60l-25-10zM875 725h22v45h-22z"/>
        <path class="gr" d="M450 690h35v50h-35z"/><path class="pd" d="M51 310h75v30l-75 15zM585 685l180 50-10 60-15-40-60-10v60l-10-60-85-40zM675 620h15v70h-15z"/>
        <path d="M770 670l130 20-10 70-60 50-60-10z" fill="#dcdcdc"/><path class="bl" d="M860 680l40 8-4 14-40-8zM820 740l40-12 4 12-40 16zM780 650l10 0-6 50-10 0zM725 320h25l-5 40-15 0zM330 180h40v30h-40zM390 185h50v25h-50z"/>
      </g>
      <g transform="translate(1200 0)">
        <path class="pd" d="M320 30h60l50 70 50-30 20 90-60 20-30-30-60 20-10-60 40-20zM310 440l190-90 20 20-190 95zM590 440l60 30 10 60-40 10zM120 680l210-110 10 20-215 115zM910 670l150 90-10 15-150-85z"/>
        <path class="g2" d="M280 180l-50-60 50-45 55 50zM970 255l130-60 30 80-130 75zM800 560l150-140 290-130v470l-300-100-60-60zM210 690l40-20 10 70-120-10zM250 620l90-30 40 70-80 40zM765 130l60-45 40 60-80 45z"/><path class="g1" d="M370 550l110-10 100 20v60l-60 55-70-50-60 0zM170 800l30-10 10 25-35 15zM310 730l20-10 20 50-30 15zM375 705l20-10 20 50-30 10zM240 760l20-10 10 30-20 8zM615 390l20-8 12 22-22 10zM210 525l90-50 30 10-90 60z"/>
        <path class="g3" d="M805 245l25 0 0 30 35-5 5-45 35-10-5 35-70 65zM930 560l40-15 10 30-30 12zM860 490l60-30 20 20-60 40zM1000 640l30-10 10 50-20-10z"/>
        <path class="y1" d="M235 260l70-15 50 130-60 25-30-80zM355 245l50-5 55 70-70 40zM315 410l70-30 5 20-70 30zM650 50h50v40l-55-5zM55 780l40-20v35h-30zM340 460l45-15 20 30-40 25zM1015 125l30-10 5 20-30 10zM430 650l40-20v45z"/>
        <path d="M235 510l55-30 15 30-50 25z" fill="#aad3df"/><path class="tq" d="M325 310l25-10 8 15-25 12zM265 540l25-10 6 12-25 12zM335 415l25-10 5 12-22 14zM1105 600l90-70h45v50l-110 50q-25 0-25-30z"/><path d="M1120 600l80-60h30v25l-95 50z" fill="#c8f7c8"/>
        <path class="bl" d="M1060 370l70-30 25 40-70 35zM1085 690l65-40 10 40-60 30zM640 350l20-40 30 10-20 50zM705 455l50-95 60 30-50 90zM500 190l60-35 10 35-60 30zM370 300l35-20 12 40-35 20zM340 470l40-15 10 30-35 20zM130 660l60-30 50 20-10 30-90 20z"/>
        <path class="g1" d="M1200 30h40v60zM1210 290l30 0v60l-20-10z"/>
      </g>
      <g transform="translate(0 930)">
        <path class="g1" d="M145 360l60 50 20 20-20 25-50 0-12 90V370zM640 220l55 5-5 45-55-15zM545 345l50 5-10 30-30-5zM600 315l80 20-10 20-70-12zM700 540l70 10-20 50-55-20zM540 750l70-10 0 60-70-10zM615 760l80 10-10 60-75 10zM450 840l45-20v40l-50 10zM1020 320l110-20 10-160 20 130 100 0V500l-60 10-20-60-170-45zM1160 60l70-10-40 55zM640 480l35 0v28l-50-5zM980 500l20 0 0 110-45 50z"/>
        <path class="g2" d="M60 300h42v35H60zM55 345h45v45H55zM730 255l100 30-10 30-90-25zM580 120l40-20-10 40zM500 580l150 20v15l-150-20zM380 110h50v20l-70 5zM51 190h20v80H51zM1220 730l30-20v60l-40 10z"/>
        <path class="tq" d="M137 460h52v86h-52zM145 632h25v35h-25zM770 120q35-15 40 20l-15 40q-25 20-42-5zM125 750h70v20h-70zM65 48h50v14H65zM960 600h18l-8 60h-20zM655 485h18v15h-18z"/>
        <path class="y1" d="M150 315h100v15l-10 70-95-60zM565 165l60 20-10 40 10 15-50 100-90-20zM130 695h90v60h-90zM130 860h100v40H130z"/>
        <path class="pk" d="M51 400h60v150H51zM940 725l120 30-20 150H890z"/><path class="pu" d="M1220 600h40v100l-40-20z"/><path d="M650 120l75-30 10 60-20 50-70-30z" fill="#e8e6e8"/>
        <path class="bl" d="M935 770l90 20-20 110h-90zM1070 780l110 40-20 80h-100zM540 260l30 10 20-50 20 10-40 80-30-10zM60 420h25v30H60zM65 500h30v30H65z"/><path class="pd" d="M1010 410l180 50 25 50-20 10-20-50-170-45zM380 880l320-50v12l-320 50zM240 685l100 10v15l-100-10zM495 815l110-20v15l-105 20z"/>
      </g>
      <g transform="translate(1200 930)">
        <path class="g1" d="M0 340l60-20 50 90 40 40-150 55zM200 730q30-25 75 0v50l-75-10zM560 510l10-35 40 40-10 40zM1205 800l30-10v70h-30zM1210 520l30-40v80z"/>
        <path class="g2" d="M555 235l60-10 60 60-10 15-80-15zM350 590l430 150-20 30-130-10-280-140zM1200 680l40 30v50l-160 20zM810 790l70-5 5 40-60-5zM5 730l50-20-30 80-20-10zM820 290h20l-5 60h-18zM1105 235l60 0v20l-50-5zM285 280l40 0-10 35zM915 70l30-10-10 80zM945 660l60 20-10 30-40-10z"/>
        <path class="y1" d="M600 80l50-30 110 20v150l-90-20-40-40-20-70zM600 360l50 10-15 70-50-20zM400 460l40-10 120 40-10 40-70-10zM870 620l60 30-5 120-80-5-45-20 0-60 60-10zM1090 630l120 30-50 100-70-30-10-50zM1005 340l100 20-10 40-90-10zM10 180l90 50-20 30-70-60zM1180 170l30 0-5 100-20-10z"/>
        <path class="tq" d="M490 710l45 22-15 30-45-25zM875 690q15-15 30 0l2 50h-32zM1010 740l55 20-10 35-50-15zM1035 350l40 0 5 30-40 10zM35 180l20-5 5 15-20 8zM405 535h28l-5 15-25-5z"/>
        <path class="gr" d="M260 105h75v35h-75zM700 420l50-10 22 40v125H665zM730 700l45 20v30h-55zM530 830l60-10 30 30-60 25-40-10zM420 850l80 40h-100zM885 175h30v20h-30z"/>
        <path class="pk" d="M660 550l110 25v100l-125-50zM60 690l90-20 120 130-20 80-200-70z"/><path class="pu" d="M60 530l100-70 150 110-40 60-180 40-60-20z"/>
        <path class="bl" d="M80 500l60 10-5 40-55-15zM75 600l80 25-5 30-80-30zM120 700l30-10 20 50-30 15zM645 125l110-5v30l-115 10zM655 170l50 0 0 40-70-10zM890 780h70v40h-70zM820 690h40l5 50-30-5zM1105 655h80v60l-60-5zM1045 60l45-5 0 40h-45zM615 385l20 4-6 35-20-6zM90 760l50 15-6 24-50-15zM160 800l70 20-6 24-70-20z"/><path d="M1130 675h25v25h-25z" fill="#ffffe0"/>
      </g>
      <!-- minor streets -->
      <g class="w" stroke-width="11">
        <path stroke-width="9" stroke="#f0eff0" d="M175 325H270M165 425L400 410M165 490L405 465M165 545L310 550L350 585M160 595L350 630M295 180L240 640M340 330L310 560"/>
        <path d="M220 160L205 260M310 30L300 150M375 40L365 150M548 30L540 180L500 620L475 960M640 190L630 300L590 600L545 960M425 30L418 150M175 270L720 315M320 745L490 750M51 850L780 855L880 880L1260 885M600 520L960 550M590 597L760 625L920 680L915 740M440 685L580 695M570 765L830 805L930 830M415 290L405 570M470 170L430 300M450 400L520 395M460 400L465 630L540 635M440 290V390M575 310L540 480M770 450L960 720M800 480L1010 490M850 490V540M720 310V360Q735 385 752 362L810 210M750 200L745 250H640M390 750L385 840M440 690L435 840M160 945H360L545 900L730 915L960 930M730 915L880 770L1000 745L1250 680M650 850L700 910M1030 580L1200 610M1080 360L1230 480M950 280L1260 390M920 310L1020 390M1110 260L1260 330M1260 215L1170 450L1100 600L1040 720M1260 590L1070 720M1080 720L1260 860M1190 450L1210 540L1260 590M1000 40L870 260M1060 60L950 240M51 360L150 362M51 485L150 490M51 585L140 590M90 400L70 680M420 150L650 100L800 60M225 120L380 30M1080 490L1200 470M790 500L760 640M1000 745L1005 860M280 160L290 270M235 850V950M420 100L530 80M1130 155L1240 165M700 570L780 575M320 590L320 745M975 90L1050 120M150 740L130 960"/>
        <g transform="translate(1200 0)"><path d="M70 240L240 420M0 370L150 460M40 570L280 430L560 270L830 140L1000 60M0 690L340 560L590 430M50 660L170 900M130 810L430 690M0 880L100 870L440 770M240 40L420 230L500 330L590 430L770 490M420 230L770 60M560 240L555 340L590 400M560 240L830 380L890 410M560 30L650 240L690 280M770 220L640 430M830 390L700 470M820 40L890 160M760 170L1240 140M890 160L1000 370M1080 30L990 150L920 150M840 360L980 310M640 510L720 640M470 690L530 700L520 770M690 710V780L630 840L620 960M840 670L845 800M910 690L890 890M780 900L1160 890M990 870L1240 740M1150 740L1170 780L1240 820M520 880L620 900L760 900M40 30L30 170L0 160M60 240L10 360M110 270L40 560M160 40L150 120L240 180M290 190L200 130M200 250L90 420M230 300L150 400M240 200L180 300M0 520L60 600M120 480L110 620M350 740L380 790M300 850L320 960M440 850L430 960M100 870V930M980 870L1150 828M630 870L900 870M640 940L1200 950M1090 150L1150 270M1100 30L1200 60M240 200L330 150M310 360L340 420M700 50L650 30M230 430L310 520M0 790L70 850"/></g>
        <g transform="translate(0 930)"><path d="M145 165L480 250M315 145L540 200M145 255L280 258L460 310M145 300L270 310L450 355L800 450M265 375L340 400L490 450L590 500L760 545L900 550M330 90L230 480M240 100L220 180M560 155L730 210L850 208M770 80L720 230L650 460M830 80L800 200M650 190L600 320M690 330L830 380M230 510L370 540M240 575L470 615Q485 620 480 640L470 790M550 590L520 750M540 480L535 560M480 460L475 540M230 650V830M380 760L360 830M1005 80L960 350L880 650L770 900M870 320L960 345M920 135L990 155M900 205L1020 250M990 490L1260 550M1030 630L1260 520M1030 630L1060 740M1060 740L1260 690M1150 560L1190 700M1100 560L1120 720M1210 540L1260 700M1140 60L1260 220M51 638H105M51 875H105M145 360L225 430M615 715L760 750M620 710Q680 660 680 720M235 782H300M260 0L250 50M470 0V50M545 0V50M610 0V50M360 0L345 50M660 40L700 0M850 0L840 40M1045 550L1030 630M900 760L820 830M1020 430L1080 440"/></g>
        <g transform="translate(1200 930)"><path d="M20 80L150 105L185 180L225 200M0 120L190 235L240 240M150 30L180 180M190 20L240 240L300 530M310 30H410M415 30L375 240L390 390M475 30L460 270M225 155L390 150M380 280L480 270M490 290L680 360M440 400L640 460M420 430L630 500M360 560L780 700M380 490L620 570M690 320L605 640M470 520L450 590M560 580L540 620M290 460L360 475M330 690L640 860M300 830L400 890M300 760L440 840M600 90L700 300L770 430M620 20L600 90M560 10L1230 25M680 255H980V170M790 165L1010 170L1050 160M850 170L840 460M955 30L950 390M790 355L960 395L1160 430L1240 405M800 460L1170 545M965 400L920 610M1035 520L1000 660M800 515L890 560L930 630L1060 690M1190 30L1195 100H1050M1120 370L1240 330M0 560L330 620M0 720L310 630M0 530L45 690M0 200L130 400L330 560M580 840Q610 780 660 780M420 80H470M160 210L190 170M385 310L450 325M1225 350L1240 405M530 235L650 200M575 870L600 820"/><circle cx="1060" cy="686" r="6" fill="#fff"/></g>
      </g>
      <!-- footpaths and cycleways -->
      <g class="rd">
        <path d="M600 30V140L660 120M430 40V110M690 200L710 260M355 300V370L400 380M265 480L320 510M560 345L545 520M660 450L720 470M480 435H520M670 480L700 600M700 640L710 720L760 735L780 640M730 640V700M330 680L440 690M420 600L430 730M165 645H250M330 750L340 830L420 820M470 850V920M650 780L660 900L780 915L890 790M1190 460L1250 640L1200 760M870 80L1110 70M1080 730L1140 880M51 870L60 960M360 850L355 940L470 900M1130 60L1260 90M1110 240L1260 250"/>
        <g transform="translate(1200 0)"><path d="M200 120L280 70L400 230L260 250M215 130L300 190M260 90L320 170M240 150L320 100M250 260L430 240L470 310L300 390M330 250L350 380M380 270L260 320M420 230L560 170M370 560L450 530L560 540L600 600L520 690M480 560V620L560 660M500 500L620 540M600 560L680 640M240 610L330 580L400 660L270 700M250 640L380 640M270 590L320 700M310 580L360 680M140 720L260 680M150 760L250 740M160 700L250 760M0 730L50 700M530 540L650 480L760 540M430 440L560 400M330 470L400 440M760 130L860 80M770 180L880 130M800 80L850 180M960 260L1110 180L1150 270L1020 350M1000 240L1060 330M1050 210L1110 300M970 300L1130 230M860 500L1130 340L1230 420L1180 560L900 620M920 460L1050 620M880 520L1060 500M1000 420L1120 580M1100 380L1160 540M920 640L1060 740M940 600L1120 640L1200 620M1060 680L1240 600M860 480L920 640M590 30L640 200L760 140M700 210L560 280M610 560V700M0 760L120 650M480 700L520 880M1230 300L1200 400"/></g>
        <g transform="translate(0 930)"><path d="M51 110L120 120M60 180V280M145 350L230 430L225 500M190 550H130L140 380M360 110L570 130M650 100L640 200M740 200L800 205M730 250L830 290L820 320L720 280M690 350L780 380M640 460L680 500M390 540L480 550L460 600M700 540L770 550L740 590L700 570M710 560L760 580M540 760L610 745V800L545 790ZM560 750L590 800M620 760L690 770L680 830L630 840ZM630 780L690 820M330 730L380 755L530 750M300 880L370 890L380 850M1020 320L1000 400L1060 420M1130 160L1020 280M1130 200L1230 260M1060 320L1130 400M1040 350L1100 320L1200 280M1140 180V280M990 490L970 700M990 500L1040 480V620M1060 460L1180 490M1110 470V560M870 550L840 650M1000 90L960 300M1150 60L1230 50"/></g>
        <g transform="translate(1200 930)"><path d="M0 340L60 300L180 330L190 420L100 450M20 240L110 370L200 420M0 480L150 440L300 520M200 410L280 420L290 500M200 730L270 720L275 780L200 775L195 730M220 740L260 770M0 750L40 700M350 620L620 760L780 790M360 600L440 650L780 770M380 640L770 760M400 680L600 760M310 780L400 850M340 770L410 830L390 870M240 190L290 240L400 240M400 160L460 180M560 20L600 60M670 420L740 400M800 350L860 340L900 380M960 620L970 720M800 770H1000L1060 820M820 830L990 820V720M1070 700V840L1230 800M1000 390L1140 420M1170 180L1160 290M1240 480L1210 560M980 40V130M850 30V160M360 500L480 540M500 640L510 620M240 350L260 420M810 900L830 780"/></g>
      </g>
      <g class="bd"><path d="M51 138H90M1075 840L1100 930M578 1308L605 1240L680 1270L650 1285L605 1275M425 1530L460 1510"/><g transform="translate(1200 0)"><path d="M790 530L850 570M800 505L1190 290M580 440L620 490M780 610L860 580"/></g><g transform="translate(0 930)"><path d="M1130 65L1180 180L1210 200L1260 310M725 645L745 655"/></g><g transform="translate(1200 930)"><path d="M0 200L50 290M90 350L180 440L330 565M360 595L560 700L720 755L810 765M640 780L680 770L780 800M810 775L990 775L1000 810H1160M700 320L750 410M610 30L595 70M790 440L800 900"/></g></g>
      <!-- main roads -->
      <g class="w"><path stroke-width="22" d="M125 30L180 150M680 30L850 200M440 155L850 195L1075 217M165 835L340 640L460 530L580 460Q640 432 740 432L1020 435L1180 440L1260 462M560 1020L565 1085L490 1200L400 1430L330 1630L300 1770"/><path stroke-width="26" d="M168 250L155 600L142 960L138 1100L125 1430L108 1830"/><path stroke-width="17" d="M51 135L440 160M400 1520Q500 1460 600 1490L740 1540M51 1760L350 1780Q400 1770 460 1730L620 1640L740 1550M1200 235L1300 240L1610 228"/><path stroke-width="27" d="M1305 30L1420 240L1540 540L1660 770L1740 950L1750 1010L1680 1230L1600 1330L1540 1530L1465 1830"/></g>
      <g stroke="#a8935a" fill="none"><path stroke-width="24" d="M1960 650L1970 960L1975 1260L1985 1580L2000 1830M1715 825L2110 820L2240 790L2440 665M2070 590L2190 930L2300 1300L2380 1490L2440 1660M790 1575L920 1620L1260 1740L1460 1830M2220 1820L2440 1700M1970 650L2110 680"/></g>
      <g class="ye"><path stroke-width="21" d="M1960 650L1970 960L1975 1260L1985 1580L2000 1830M1715 825L2110 820L2240 790L2440 665M2070 590L2190 930L2300 1300L2380 1490L2440 1660M790 1575L920 1620L1260 1740L1460 1830M2220 1820L2440 1700M1970 650L2110 680"/></g>
      <g stroke="#a87c33" fill="none"><path stroke-width="43" d="M1133 20L1060 330L1010 550L960 760L910 960L840 1260L760 1610L705 1840M40 1013L500 1005L900 980L1200 948Q1350 925 1500 890Q1650 845 1720 775L1940 650Q1970 620 1975 480M1990 490L2440 245"/></g>
      <g class="or"><path stroke-width="39" d="M1133 20L1060 330L1010 550L960 760L910 960L840 1260L760 1610L705 1840M40 1013L500 1005L900 980L1200 948Q1350 925 1500 890Q1650 845 1720 775L1940 650Q1970 620 1975 480M1990 490L2440 245M1960 650L2075 585L2030 480"/><circle cx="137" cy="1015" r="24" fill="#f7d19c" stroke="none"/></g>
      <!-- rail and tram -->
      <path d="M800 20L850 190L920 400L1020 700L1075 960" stroke="#777" stroke-width="17" fill="none"/><path d="M796 20L845 190L915 400L1015 700L1071 960M804 20L856 190L926 400L1026 700L1079 960" stroke="#505050" stroke-width="3" fill="none"/><path d="M800 20L850 190L920 400L1020 700L1075 960" stroke="#ddd" stroke-width="2" stroke-dasharray="18 8" fill="none"/>
      <path d="M1074 990L980 1370L925 1620L880 1840" stroke="#666" stroke-width="13" fill="none"/><path d="M1074 990L980 1370L925 1620L880 1840" stroke="#bbb" stroke-width="6" stroke-dasharray="14 26" fill="none"/>
      <path class="tr" d="M51 133L440 155L660 180L765 190Q800 185 830 120L835 60L820 20M672 30L660 140Q662 180 700 186M1133 20L1060 330L1010 550L960 760L910 960L840 1260L760 1610L705 1840M40 1013L500 1005L900 980L1200 948Q1350 925 1500 890Q1650 845 1720 775L1940 650Q1965 640 1968 600M930 30L1120 75L1260 103L1350 125L1415 118L1520 40L1545 28M1942 20L1972 90Q1972 110 1945 125Q1928 140 1945 170L2050 360Q2055 375 2040 400L1995 480L1975 570L1967 640L1980 960L1988 1350L2008 1840M1990 502L2440 256"/>
      <path fill="#7b80b8" d="M216 135h18v18h-18zM717 180h18v18h-18zM819 30h18v10h-18zM1170 75h18v18h-18zM1101 123h18v18h-18zM1008 528h18v18h-18zM186 1005h18v18h-18zM501 996h18v18h-18zM843 981h18v18h-18zM888 1032h18v18h-18zM750 1605h18v18h-18zM1506 36h18v18h-18zM1950 192h18v18h-18zM2397 267h18v18h-18zM1968 558h18v18h-18zM1716 774h18v18h-18zM1971 846h18v18h-18zM1326 930h18v18h-18zM1974 1116h18v18h-18zM1989 1653h18v18h-18z"/>
      <!-- park details -->
      <rect x="2214" y="508" width="40" height="50" fill="#c8b9ac"/><path d="M2220 515h28v12h-28zM2225 527l-4 25M2243 527l4 25M2222 540h24" stroke="#444" stroke-width="4" fill="none"/><path d="M2100 580q30-40 120-60" stroke="#a86a20" stroke-width="4" stroke-dasharray="14 6" fill="none"/><path d="M2160 590l20 20m0-20l-20 20M2190 580l20 20m0-20l-20 20M2195 610q40-40 55-5-40 10-90 5" stroke="#777" stroke-width="2" fill="none"/>
      <!-- shields -->
      <g stroke-width="3"><rect x="857" y="180" width="80" height="48" rx="4" fill="#f0f0f0" stroke="#bbb"/><rect x="1028" y="932" width="138" height="50" rx="4" fill="#f3e0c4" stroke="#c9a777"/><rect x="2110" y="792" width="117" height="50" rx="4" fill="#f5f7d5" stroke="#c5c98e"/></g>
      <g text-anchor="middle"><text x="897" y="214" textLength="46" style="stroke:none">D 5</text><text x="1097" y="967" textLength="98" style="stroke:none;fill:#5b3b10;font-size:29px">D 1090</text><text x="2168" y="827" textLength="80" style="stroke:none;fill:#4a4d10;font-size:29px">D 523</text></g>
      <!-- labels -->
      <text transform="translate(284 90) rotate(-22)" textLength="165">Rue René Thom</text><text transform="translate(398 175) rotate(3)" textLength="167">Cours Berriat</text><text transform="translate(534 373) rotate(-86)" textLength="175">Rue d'Alembert</text><text x="47" y="267" textLength="120" style="fill:#444;font-size:30px">uchayer-</text><text x="45" y="306" textLength="86" style="fill:#444;font-size:30px">Viallet</text><text x="46" y="394" font-style="italic" style="fill:#944;font-size:28px">ayer-</text><text x="50" y="430" font-style="italic" style="fill:#944;font-size:28px">et</text>
      <text transform="translate(850 252) rotate(72)" textLength="185" style="font-size:26px">Avenue de Vizille</text><text x="870" y="471" textLength="144" style="font-size:30px;fill:#333">L'Estacade</text><text x="988" y="731" textLength="86" style="font-size:30px;fill:#333">L'Aigle</text><text transform="translate(192 818) rotate(-49)" textLength="245">Rue Nicolas Chorier</text><text transform="translate(208 826) rotate(-30)" textLength="125" style="font-size:26px">Rue Raspail</text><text transform="translate(684 792) rotate(9)" textLength="132">Rue Charrel</text><text transform="translate(1130 562) rotate(-66)" textLength="112" style="font-size:26px">Rue Thiers</text><text transform="translate(1060 706) rotate(-65)" textLength="112" style="font-size:26px">Rue Thiers</text><text transform="translate(1115 700) rotate(-44)" textLength="140">Rue Turenne</text><text transform="translate(1114 230) rotate(3)" textLength="194" style="font-size:25px">D 5  Cours Berriat</text>
      <g transform="translate(1200 0)"><text transform="translate(-35 32) rotate(12)" textLength="130" style="font-size:25px">Rue Billerey</text><text transform="translate(92 225) rotate(-58)" textLength="115" style="font-size:26px">Rue Thiers</text><text transform="translate(150 25) rotate(63)" textLength="110" style="font-size:26px">eur Mazet</text><text transform="translate(235 251) rotate(-3)" textLength="36" font-style="italic" style="font-size:24px">D 5</text><text transform="translate(415 30) rotate(57)" textLength="160" style="font-size:26px">Rue de la Poste</text><text transform="translate(622 130) rotate(-25)" textLength="150" style="font-size:26px">Rue Condillac</text><text x="803" y="198" textLength="145" style="font-size:30px;fill:#333">Préfecture</text><text x="1068" y="38" textLength="155" font-style="italic" style="font-size:33px;fill:#777">Mutualité</text><text x="1066" y="78" textLength="158" font-style="italic" style="font-size:34px;fill:#777">Préfecture</text><text transform="translate(950 254) rotate(-26)" textLength="155">Rue Dolomieu</text><text transform="translate(32 340) rotate(25)" textLength="155">Rue Génissieu</text><text x="34" y="490" textLength="190" style="font-size:30px;fill:#333">Championnet</text><text transform="translate(512 358) rotate(50)" textLength="36" font-style="italic" style="font-size:24px">D 5</text><text transform="translate(702 480) rotate(15)" textLength="36" font-style="italic" style="font-size:24px">D 5</text><text x="1110" y="462" font-style="italic" style="fill:#3a7a4a;font-size:32px">Parc Paul</text><text x="1130" y="504" font-style="italic" style="fill:#3a7a4a;font-size:32px">Mistral</text><text transform="translate(800 508) rotate(61)" textLength="190" style="font-size:25px">Place Paul Mistral</text><text transform="translate(62 706) rotate(66)" textLength="140" style="font-size:26px">Rue Marceau</text><text transform="translate(192 788) rotate(-24)" textLength="200">Allée Henri Frenay</text><text transform="translate(1190 792) rotate(88)" textLength="150" style="font-size:26px">Chemin d'Isly</text><text x="1036" y="966" textLength="150">Rue Moyrand</text></g>
      <g transform="translate(0 930)"><text x="226" y="437" font-style="italic" textLength="242" style="font-size:43px;fill:#666">Eaux-Claires</text><text transform="translate(502 382) rotate(15)" textLength="250" style="font-size:26px">Rue Joseph Bouchayer</text><path id="bd" d="M412 598Q520 535 620 570T760 628" fill="none"/><text textLength="318" style="font-size:28px"><textPath href="#bd" textLength="318">Boulevard Roger Salengro</textPath></text><path id="ec" d="M120 685Q230 700 350 627L380 605" fill="none"/><text style="font-size:25px"><textPath href="#ec" textLength="228">Rue des Eaux Claires</textPath></text><path id="gm" d="M1036 328Q1070 210 1180 205L1220 204" fill="none"/><text style="font-size:25px"><textPath href="#gm" textLength="200">Rue Général Mangin</textPath></text><text transform="translate(863 912) rotate(-83)" textLength="180" style="fill:#666">on-Perrache à</text><text transform="translate(905 705) rotate(-77)" textLength="525" style="fill:#666;font-size:29px">Marseille-Saint-Charles (via Grenoble)</text><text x="1072" y="370" font-style="italic" textLength="175" style="fill:#3a7a4a;font-size:30px">Parc Georges</text><text x="1092" y="406" font-style="italic" textLength="134" style="fill:#3a7a4a;font-size:30px">Pompidou</text><text transform="translate(1013 510) rotate(14)" textLength="146">Rue Jacquard</text><text transform="translate(780 905) rotate(-66)" textLength="100" style="font-size:26px">in Meney</text><text transform="translate(1040 910) rotate(-82)" textLength="140" style="font-size:26px">ne Marquian</text><text transform="translate(1168 730) rotate(-14)" textLength="245">Rue Honoré de Balzac</text><text transform="translate(1130 788) rotate(21)" textLength="195" style="font-size:30px">Rue des Alliés</text></g>
      <g transform="translate(1200 930)"><text x="296" y="274" font-style="italic" textLength="136" style="fill:#666;font-size:35px">Capuche</text><text transform="translate(55 292) rotate(50)" textLength="205" style="font-size:26px">Rue Léo Lagrange</text><text transform="translate(113 585) rotate(13)" textLength="146">Rue Jacquard</text><text transform="translate(864 160) rotate(-88)" textLength="128" style="font-size:26px">Rue Monge</text><text transform="translate(1068 146) rotate(8)" textLength="170">Rue de la Bajat</text><text transform="translate(1084 295) rotate(69)" textLength="265" style="font-size:29px">Avenue Jean Perrot</text><text transform="translate(1220 386) rotate(-84)" textLength="155">Rue Maurice</text><text transform="translate(322 850) rotate(25)" textLength="130" style="font-size:26px">Rue Eugène</text><text transform="translate(62 895) rotate(-62)" style="font-size:25px">ière</text></g>
      <g><g fill="#a80000"><circle cx="1185" cy="363" r="22"/><circle cx="459" cy="804" r="22"/><circle cx="393" cy="861" r="22"/></g><path stroke="#fff" stroke-width="6" d="M1172 363h26M1185 350v26M446 804h26M459 791v26M380 861h26M393 848v26"/></g>
    </svg>
    <div class="zoomc"><div>+</div><div>−</div></div>
    <div class="attr d-flex align-items-center"><svg width="10" height="6" class="me-1"><path fill="#4c7be1" d="M0 0h10v3H0z"/><path fill="#ffd500" d="M0 3h10v3H0z"/></svg><span><u>Leaflet</u> | © <u>OpenStreetMap</u> - <u>Marqueur</u> icon by <u>Icons8</u></span></div>
    </section>
  </div>
</div>
</div>
<script src="https://cdn.jsdelivr.net/npm/bootstrap@5.3.0/dist/js/bootstrap.bundle.min.js"></script>
<script>
// Building footprints: small blocks following the street orientation of each district
let s=7;const r=()=>(s=(s*16807)%2147483647)/2147483647;
let d='';
const put=(x,y,w,h,a)=>{const c=Math.cos(a),n=Math.sin(a),p=(u,v)=>(x+u*c-v*n).toFixed(0)+' '+(y+u*n+v*c).toFixed(0);
  return r()<.35?`M${p(0,0)}L${p(w,0)}L${p(w,h)}L${p(w*.55,h)}L${p(w*.55,h*.5)}L${p(0,h*.5)}Z`:`M${p(0,0)}L${p(w,0)}L${p(w,h)}L${p(0,h)}Z`};
for(let y=30;y<1830;y+=26)for(let x=40;x<2440;x+=28){
  const top=y<960,a=top?(x>1150?-.5:.06):(x>1000?.2:.26);
  if(r()<(top?.08:.16))continue;
  d+=put(x+r()*8,y+r()*8,(top?16:12)+r()*22,(top?13:10)+r()*20,a);
}
document.getElementById('blds').innerHTML=`<path d="${d}" fill="#d9d0c9" stroke="#bfb0a4" stroke-width="2"/>`;
</script>
</body>
</html>
